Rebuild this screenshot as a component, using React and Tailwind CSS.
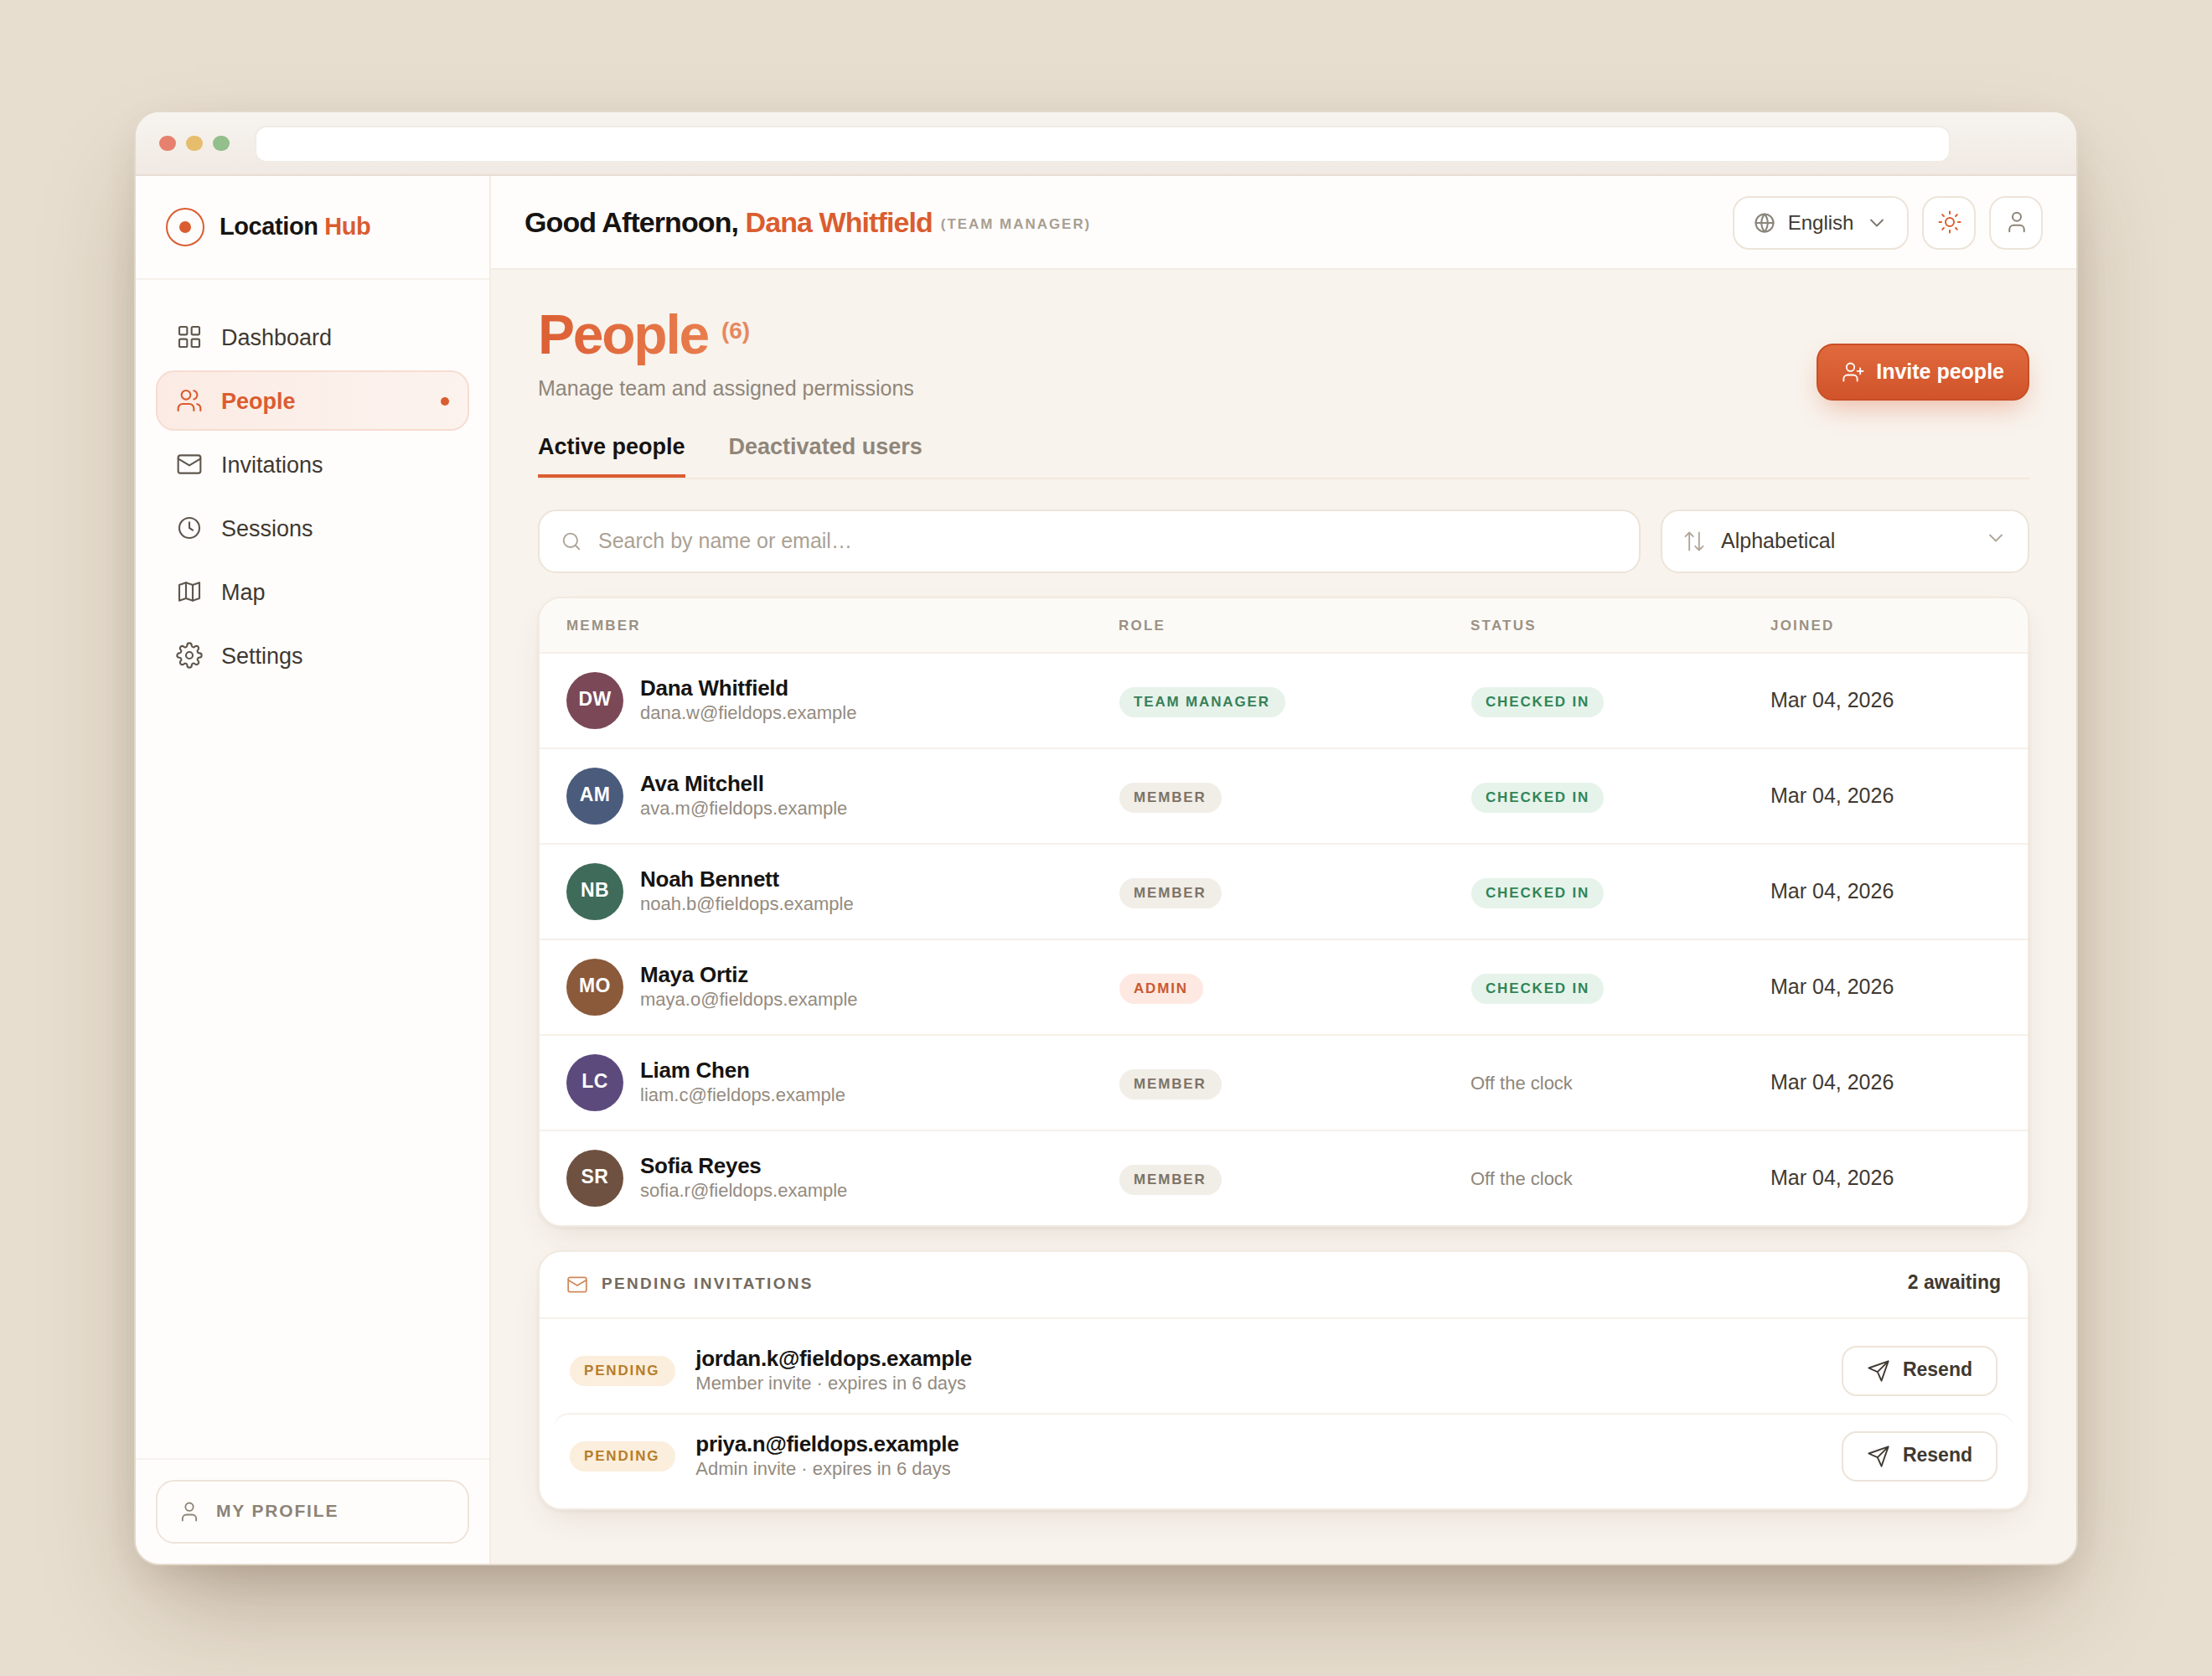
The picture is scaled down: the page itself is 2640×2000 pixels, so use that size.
import React, { useState } from "react";

const navItems = [
  { id: "dashboard", label: "Dashboard", icon: "grid" },
  { id: "people", label: "People", icon: "users" },
  { id: "invitations", label: "Invitations", icon: "mail" },
  { id: "sessions", label: "Sessions", icon: "clock" },
  { id: "map", label: "Map", icon: "map" },
  { id: "settings", label: "Settings", icon: "settings" },
];

const tabs = [
  { id: "active", label: "Active people" },
  { id: "deactivated", label: "Deactivated users" },
];

const members = [
  { initials: "DW", name: "Dana Whitfield", email: "dana.w@fieldops.example", role: "Team Manager", checkedIn: true, joined: "Mar 04, 2026", color: "bg-[#7b4857]" },
  { initials: "AM", name: "Ava Mitchell", email: "ava.m@fieldops.example", role: "Member", checkedIn: true, joined: "Mar 04, 2026", color: "bg-[#4a5b7c]" },
  { initials: "NB", name: "Noah Bennett", email: "noah.b@fieldops.example", role: "Member", checkedIn: true, joined: "Mar 04, 2026", color: "bg-[#3f6b5a]" },
  { initials: "MO", name: "Maya Ortiz", email: "maya.o@fieldops.example", role: "Admin", checkedIn: true, joined: "Mar 04, 2026", color: "bg-[#8a5a3b]" },
  { initials: "LC", name: "Liam Chen", email: "liam.c@fieldops.example", role: "Member", checkedIn: false, joined: "Mar 04, 2026", color: "bg-[#5c4a7d]" },
  { initials: "SR", name: "Sofia Reyes", email: "sofia.r@fieldops.example", role: "Member", checkedIn: false, joined: "Mar 04, 2026", color: "bg-[#6e5140]" },
];

const invitations = [
  { email: "jordan.k@fieldops.example", detail: "Member invite · expires in 6 days" },
  { email: "priya.n@fieldops.example", detail: "Admin invite · expires in 6 days" },
];

const pillStyles = {
  "Team Manager": "pr-[18px] bg-[#e6f2ea] text-[#38805a]",
  Member: "pr-[18px] bg-[#f1ede7] text-[#7c7367]",
  Admin: "pr-[18px] bg-[#fde9e2] text-[#cb592f]",
  "Checked in": "pr-[17px] bg-[#e6f3ea] text-[#2f8558]",
  Pending: "pr-[19px] bg-[#fbeedc] text-[#b67d2b]",
};

const icons = {
  grid: (
    <>
      <rect x="3" y="3" width="7" height="7" rx="1.2" />
      <rect x="14" y="3" width="7" height="7" rx="1.2" />
      <rect x="3" y="14" width="7" height="7" rx="1.2" />
      <rect x="14" y="14" width="7" height="7" rx="1.2" />
    </>
  ),
  users: (
    <>
      <path d="M16 21v-2a4 4 0 0 0-4-4H6a4 4 0 0 0-4 4v2" />
      <circle cx="9" cy="7" r="4" />
      <path d="M22 21v-2a4 4 0 0 0-3-3.87" />
      <path d="M16 3.13a4 4 0 0 1 0 7.75" />
    </>
  ),
  userPlus: (
    <>
      <path d="M16 21v-2a4 4 0 0 0-4-4H6a4 4 0 0 0-4 4v2" />
      <circle cx="9" cy="7" r="4" />
      <path d="M19 8v6M22 11h-6" />
    </>
  ),
  user: (
    <>
      <path d="M19 21v-2a4 4 0 0 0-4-4H9a4 4 0 0 0-4 4v2" />
      <circle cx="12" cy="7" r="4" />
    </>
  ),
  mail: (
    <>
      <rect x="2" y="4" width="20" height="16" rx="2" />
      <path d="m2 7 10 6 10-6" />
    </>
  ),
  clock: (
    <>
      <circle cx="12" cy="12" r="9" />
      <path d="M12 7v5l3 2" />
    </>
  ),
  map: (
    <>
      <path d="M9 4 3 6v14l6-2 6 2 6-2V4l-6 2-6-2z" />
      <path d="M9 4v14M15 6v14" />
    </>
  ),
  settings: (
    <>
      <circle cx="12" cy="12" r="3" />
      <path d="M19.4 15a1.65 1.65 0 0 0 .33 1.82l.06.06a2 2 0 0 1 0 2.83 2 2 0 0 1-2.83 0l-.06-.06a1.65 1.65 0 0 0-1.82-.33 1.65 1.65 0 0 0-1 1.51V21a2 2 0 0 1-2 2 2 2 0 0 1-2-2v-.09A1.65 1.65 0 0 0 9 19.4a1.65 1.65 0 0 0-1.82.33l-.06.06a2 2 0 0 1-2.83 0 2 2 0 0 1 0-2.83l.06-.06a1.65 1.65 0 0 0 .33-1.82 1.65 1.65 0 0 0-1.51-1H3a2 2 0 0 1-2-2 2 2 0 0 1 2-2h.09A1.65 1.65 0 0 0 4.6 9a1.65 1.65 0 0 0-.33-1.82l-.06-.06a2 2 0 0 1 0-2.83 2 2 0 0 1 2.83 0l.06.06a1.65 1.65 0 0 0 1.82.33H9a1.65 1.65 0 0 0 1-1.51V3a2 2 0 0 1 2-2 2 2 0 0 1 2 2v.09a1.65 1.65 0 0 0 1 1.51 1.65 1.65 0 0 0 1.82-.33l.06-.06a2 2 0 0 1 2.83 0 2 2 0 0 1 0 2.83l-.06.06a1.65 1.65 0 0 0-.33 1.82V9a1.65 1.65 0 0 0 1.51 1H21a2 2 0 0 1 2 2 2 2 0 0 1-2 2h-.09a1.65 1.65 0 0 0-1.51 1z" />
    </>
  ),
  globe: (
    <>
      <circle cx="12" cy="12" r="9" />
      <path d="M3 12h18" />
      <path d="M12 3c2.2 2.6 3.2 5.6 3.2 9s-1 6.4-3.2 9c-2.2-2.6-3.2-5.6-3.2-9s1-6.4 3.2-9z" />
    </>
  ),
  sun: (
    <>
      <circle cx="12" cy="12" r="4" />
      <path d="M12 2v2M12 20v2M4.93 4.93l1.41 1.41M17.66 17.66l1.41 1.41M2 12h2M20 12h2M6.34 17.66l-1.41 1.41M19.07 4.93l-1.41 1.41" />
    </>
  ),
  chevron: <path d="m6 9 6 6 6-6" />,
  search: (
    <>
      <circle cx="11" cy="11" r="7" />
      <path d="m20 20-3.5-3.5" />
    </>
  ),
  sort: (
    <>
      <path d="m3 7 4-4 4 4M7 3v18" />
      <path d="m13 17 4 4 4-4M17 21V3" />
    </>
  ),
  send: <path d="M22 2 11 13M22 2l-7 20-4-9-9-4 20-7z" />,
};

const Icon = ({ name, className, strokeWidth = 1.6 }) => (
  <svg
    viewBox="0 0 24 24"
    fill="none"
    stroke="currentColor"
    strokeWidth={strokeWidth}
    strokeLinecap="round"
    strokeLinejoin="round"
    className={`shrink-0 ${className}`}
  >
    {icons[name]}
  </svg>
);

const Pill = ({ label }) => (
  <span
    className={`inline-flex h-9 items-center rounded-full pl-[17px] text-[17px] font-bold uppercase tracking-[0.108em] whitespace-nowrap ${pillStyles[label]}`}
  >
    {label}
  </span>
);

const TitleBar = () => (
  <div className="flex h-[76px] shrink-0 items-start border-b-2 border-[#e8ddd5] bg-linear-to-b from-[#f7f4ef] to-[#f1e9e3] pl-7">
    <div className="flex gap-3 pt-7">
      <span className="h-[18px] w-5 rounded-full bg-[#e6816d]" />
      <span className="h-[18px] w-5 rounded-full bg-[#e6bd6c]" />
      <span className="h-[18px] w-5 rounded-full bg-[#92bf8b]" />
    </div>
    <div className="mt-4 mr-[150px] ml-[30px] h-11 flex-1 rounded-[14px] border-2 border-[#f0ebe5] bg-white" />
  </div>
);

const Sidebar = () => {
  const [current, setCurrent] = useState("people");

  return (
    <aside className="flex w-[424px] shrink-0 flex-col border-r-2 border-[#f3ece3] bg-[#fffdfc]">
      <div className="flex h-[124px] items-center gap-[18px] border-b-2 border-[#f7f1eb] pl-9">
        <svg viewBox="0 0 46 46" className="h-[46px] w-[46px]" fill="none">
          <circle cx="23" cy="23" r="22" stroke="#da5d30" strokeWidth="2" />
          <circle cx="23" cy="23" r="7" fill="#da5d30" />
        </svg>
        <span className="pb-0.5 text-[29px] leading-9 font-bold tracking-[-0.014em] text-[#161412]">
          Location <span className="text-[#da5d30]">Hub</span>
        </span>
      </div>

      <nav className="flex flex-1 flex-col gap-1 px-6 pt-8">
        {navItems.map((item) => {
          const active = item.id === current;
          return (
            <button
              key={item.id}
              type="button"
              onClick={() => setCurrent(item.id)}
              className={`flex h-[72px] items-center gap-[22px] rounded-[22px] border-2 px-[22px] text-[27px] ${
                active
                  ? "border-[#f7dcd1] bg-linear-to-r from-[#fbebe4] to-[#fcf3ee] font-bold text-[#da5d30]"
                  : "border-transparent text-[#3f3931]"
              }`}
            >
              <Icon
                name={item.icon}
                className={active ? "h-8 w-8 text-[#da5d30]" : "h-8 w-8 text-[#5f574d]"}
              />
              <span className="pt-0.5">{item.label}</span>
              {active && <span className="mt-px ml-auto h-2.5 w-2.5 rounded-full bg-[#da5d30]" />}
            </button>
          );
        })}
      </nav>

      <div className="border-t-2 border-[#f7f1eb] p-6">
        <button
          type="button"
          className="flex h-[76px] w-full items-center gap-[18px] rounded-[22px] border-2 border-[#ede4d9] px-6 text-[21px] font-bold tracking-[0.087em] text-[#8d8376] uppercase"
        >
          <Icon name="user" className="h-7 w-7" />
          <span className="pb-0.5">My profile</span>
        </button>
      </div>
    </aside>
  );
};

const TopBar = () => (
  <header className="flex h-28 shrink-0 items-center border-b-2 border-[#f3ece3] bg-[#fffdfc] px-10">
    <p className="flex-1 pt-0.5 text-[34px] leading-10 font-bold tracking-[-0.027em] text-[#161412]">
      Good Afternoon, <span className="text-[#da5d30]">Dana Whitfield</span>
      <span className="ml-2.5 align-[4px] text-[17px] tracking-[0.115em] text-[#a89f92] uppercase">
        (Team Manager)
      </span>
    </p>
    <div className="flex gap-4 pt-0.5">
      <button
        type="button"
        className="flex h-16 items-center gap-[13.6px] rounded-[20px] border-2 border-[#ede4d9] bg-white px-[22px] text-[24px] text-[#3f3931]"
      >
        <Icon name="globe" className="h-7 w-7 text-[#8a857c]" strokeWidth={1.8} />
        English
        <Icon name="chevron" className="h-7 w-7 text-[#7d766c]" />
      </button>
      <button
        type="button"
        className="flex h-16 w-16 items-center justify-center rounded-[20px] border-2 border-[#ede4d9] bg-white text-[#da5d30]"
      >
        <Icon name="sun" className="mb-0.5 ml-0.5 h-[30px] w-[30px]" />
      </button>
      <button
        type="button"
        className="flex h-16 w-16 items-center justify-center rounded-[20px] border-2 border-[#ede4d9] bg-white text-[#8d8376]"
      >
        <Icon name="user" className="mb-0.5 ml-0.5 h-[30px] w-[30px]" />
      </button>
    </div>
  </header>
);

const PageHeader = () => (
  <div className="flex items-end justify-between">
    <div>
      <h1 className="flex items-start gap-4 font-bold">
        <span className="bg-linear-to-r from-[#dc5f34] to-[#e87d4d] bg-clip-text pb-4 text-[66px] leading-[66px] tracking-[-0.034em] text-transparent">
          People
        </span>
        <span className="mt-[11px] text-[28px] leading-9 text-[#e5895f]">(6)</span>
      </h1>
      <p className="mb-px text-[25px] leading-[30px] text-[#8f867a]">
        Manage team and assigned permissions
      </p>
    </div>
    <button
      type="button"
      className="mb-px flex h-[68px] items-center gap-[13px] rounded-[20px] border-2 border-[#c94f26] bg-linear-to-b from-[#e06a3d] to-[#d1532a] px-7 text-[25px] font-bold text-white shadow-[0_14px_32px_-8px_rgba(218,93,48,0.4)]"
    >
      <Icon name="userPlus" className="h-7 w-7" />
      Invite people
    </button>
  </div>
);

const Tabs = () => {
  const [tab, setTab] = useState("active");

  return (
    <div className="mt-[39px] flex gap-[52px] border-b-2 border-[#f1e9df]">
      {tabs.map((t) => (
        <button
          key={t.id}
          type="button"
          onClick={() => setTab(t.id)}
          className={`border-b-4 pb-[18px] text-[27px] leading-[30px] font-bold ${
            t.id === tab
              ? "border-[#da5d30] text-[#161412]"
              : "border-transparent text-[#8f867a]"
          }`}
        >
          {t.label}
        </button>
      ))}
    </div>
  );
};

const Filters = () => (
  <div className="mt-9 flex gap-6 text-[25px]">
    <div className="flex h-[76px] flex-1 items-center gap-[18px] rounded-[22px] border-2 border-[#ede4d9] bg-white px-6">
      <Icon name="search" className="h-7 w-7 text-[#aba194]" />
      <span className="text-[#aba194]">Search by name or email…</span>
    </div>
    <button
      type="button"
      className="flex h-[76px] w-[440px] items-center gap-[18px] rounded-[22px] border-2 border-[#ede4d9] bg-white px-6 text-[#3f3931]"
    >
      <Icon name="sort" className="h-7 w-7 text-[#b0a698]" />
      Alphabetical
      <Icon name="chevron" className="mb-2 ml-auto h-7 w-7 text-[#b0a698]" />
    </button>
  </div>
);

const MembersTable = () => (
  <section className="mt-7 overflow-hidden rounded-[28px] border-2 border-[#f2eae0] bg-white shadow-[0_2px_4px_rgba(90,60,30,0.05),0_16px_40px_-12px_rgba(90,60,30,0.12)]">
    <div className="grid h-[66px] grid-cols-[659px_420px_358px_1fr] items-center border-b-2 border-[#f6f0e9] bg-[#fcfaf7] pt-0.5 pl-8 text-[17px] font-bold tracking-[0.13em] text-[#9b9184] uppercase">
      <span>Member</span>
      <span>Role</span>
      <span>Status</span>
      <span>Joined</span>
    </div>
    {members.map((m) => (
      <div
        key={m.email}
        className="grid h-[114px] grid-cols-[660px_420px_357px_1fr] items-center border-b-2 border-[#f6f0e9] pl-8 last:h-28 last:border-b-0"
      >
        <div className="flex items-center gap-5">
          <span
            className={`flex h-[68px] w-[68px] items-center justify-center rounded-full pb-[3px] text-[23px] font-bold tracking-[0.02em] text-white ${m.color}`}
          >
            {m.initials}
          </span>
          <div className="pt-px">
            <p className="text-[26px] leading-7 font-bold tracking-[-0.01em] text-[#161412]">
              {m.name}
            </p>
            <p className="mt-px text-[22px] leading-[30px] text-[#948b7f]">{m.email}</p>
          </div>
        </div>
        <div className="mt-1 flex">
          <Pill label={m.role} />
        </div>
        {m.checkedIn ? (
          <div className="mt-1 flex">
            <Pill label="Checked in" />
          </div>
        ) : (
          <span className="-ml-px text-[22px] text-[#8f867a]">Off the clock</span>
        )}
        <span className="text-[25px] text-[#3f3931]">{m.joined}</span>
      </div>
    ))}
  </section>
);

const PendingInvitations = () => (
  <section className="mt-7 rounded-[28px] border-2 border-[#f2eae0] bg-white shadow-[0_2px_4px_rgba(90,60,30,0.05),0_16px_40px_-12px_rgba(90,60,30,0.12)]">
    <div className="flex h-20 items-center gap-4 border-b-2 border-[#f6f0e9] px-8">
      <Icon name="mail" className="h-[26px] w-[26px] text-[#cf895c]" />
      <h2 className="mb-0.5 text-[19px] font-bold tracking-[0.12em] text-[#746a5e] uppercase">
        Pending invitations
      </h2>
      <span className="mb-1.5 ml-auto text-[23px] font-bold text-[#3f3931]">2 awaiting</span>
    </div>
    <ul className="px-4 py-3">
      {invitations.map((inv) => (
        <li
          key={inv.email}
          className="flex items-center gap-6 rounded-[20px] border-[#f6f0e9] p-5 not-first:border-t-2"
        >
          <Pill label="Pending" />
          <div className="flex-1 pt-px">
            <p className="text-[26px] leading-7 font-bold tracking-[-0.012em] text-[#161412]">
              {inv.email}
            </p>
            <p className="mt-px text-[22px] leading-[30px] text-[#948b7f]">{inv.detail}</p>
          </div>
          <button
            type="button"
            className="flex h-[60px] items-center gap-[15px] rounded-[18px] border-2 border-[#ede4d9] bg-white px-7 text-[23px] font-bold text-[#3f3931]"
          >
            <Icon name="send" className="h-7 w-7" />
            <span className="pb-1">Resend</span>
          </button>
        </li>
      ))}
    </ul>
  </section>
);

const App = () => {
  return (
    <div className="flex h-[2000px] w-[2640px] items-center justify-center bg-[#e7decf] font-['Liberation_Sans',Arial,sans-serif]">
      <div className="flex h-[1736px] w-[2320px] flex-col overflow-hidden rounded-[30px] border-2 border-[#e2d9cc] bg-[#f8f3ed] shadow-[0_60px_120px_-30px_rgba(80,50,25,0.35),0_16px_48px_-12px_rgba(80,50,25,0.16)]">
        <TitleBar />
        <div className="flex min-h-0 flex-1">
          <Sidebar />
          <div className="flex flex-1 flex-col">
            <TopBar />
            <main className="flex-1 px-14 pt-11">
              <PageHeader />
              <Tabs />
              <Filters />
              <MembersTable />
              <PendingInvitations />
            </main>
          </div>
        </div>
      </div>
    </div>
  );
};

export default App;
